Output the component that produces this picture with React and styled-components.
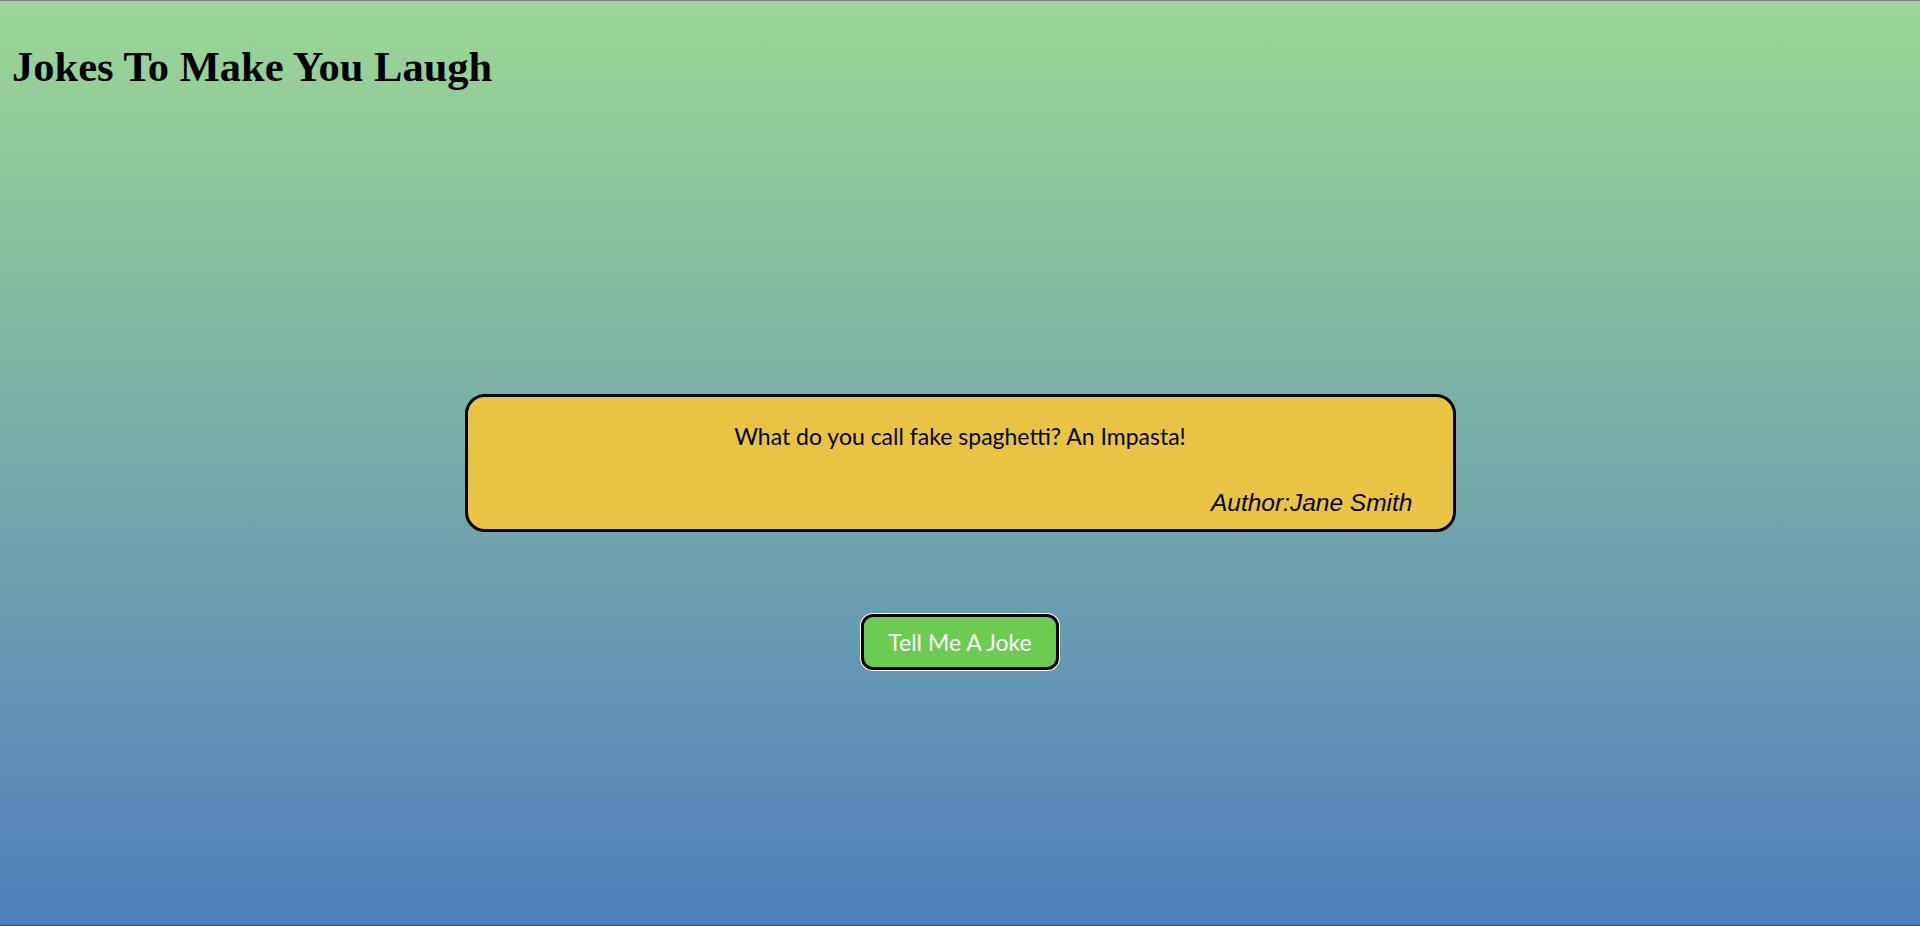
import styled, { createGlobalStyle } from "styled-components";

const GlobalStyle = createGlobalStyle`
    html, body {
        margin: 0;
        padding: 0;
    }
    body {
        font-family: "Liberation Serif", serif;
    }
`;

const Page = styled.div`
    box-sizing: border-box;
    height: 100vh;
    display: grid;
    grid-template-rows: 1fr auto 1fr;
    justify-items: center;
    background: linear-gradient(to bottom, #9bd795, #4f7fbd);
    border-top: 1px solid #7a7f88;
    border-bottom: 1px solid #334a66;
`;

const Header = styled.header`
    justify-self: start;
    align-self: start;
    padding: 0 12px;
`;

const Title = styled.h1`
    margin: 41px 0 0;
    font-family: "Liberation Serif", serif;
    font-size: 42.5px;
    font-weight: bold;
    color: #000;
`;

const Card = styled.div`
    box-sizing: border-box;
    width: 991px;
    min-height: 138px;
    padding: 25px 40px 12px;
    display: flex;
    flex-direction: column;
    background-color: #e9c442;
    border: 3px solid #000;
    border-radius: 20px;
`;

const JokeText = styled.p`
    margin: 0;
    text-align: center;
    font-family: Lato, "Open Sans", sans-serif;
    font-size: 23px;
    color: #000;
`;

const Author = styled.p`
    margin: auto 0 0;
    text-align: right;
    font-family: "Liberation Sans", Arial, sans-serif;
    font-style: italic;
    font-size: 24.5px;
    color: #000;
`;

const Footer = styled.div`
    align-self: start;
    padding-top: 82px;
`;

const JokeButton = styled.button`
    box-sizing: border-box;
    width: 198px;
    height: 56px;
    background-color: #6ccc52;
    color: #fff;
    font-family: Lato, "Open Sans", sans-serif;
    font-size: 23px;
    border: 3px solid #000;
    border-radius: 12px;
    box-shadow: 0 0 0 1px #fff;
    cursor: pointer;
`;

function App() {
    return (
        <>
            <GlobalStyle />
            <Page>
                <Header>
                    <Title>Jokes To Make You Laugh</Title>
                </Header>
                <Card>
                    <JokeText>What do you call fake spaghetti? An Impasta!</JokeText>
                    <Author>Author:Jane Smith</Author>
                </Card>
                <Footer>
                    <JokeButton>Tell Me A Joke</JokeButton>
                </Footer>
            </Page>
        </>
    );
}

export default App;
